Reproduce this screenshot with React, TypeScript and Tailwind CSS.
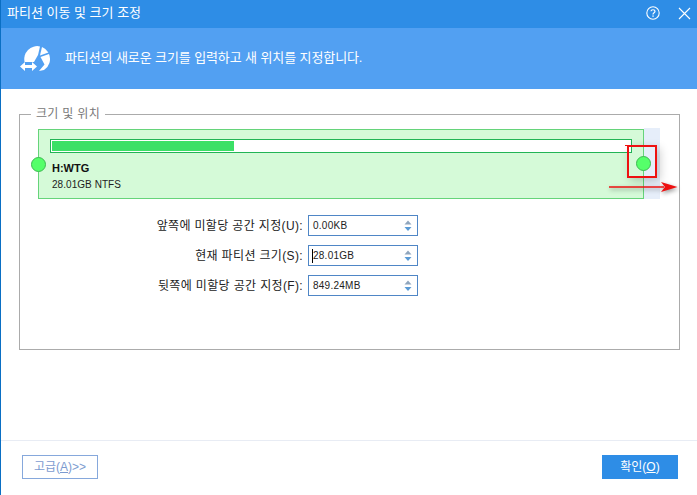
import React from "react";

const font = { fontFamily: '"Liberation Sans", "Noto Sans CJK KR", sans-serif' };

function Spin({ label, hot, value, caret }: { label: string; hot: string; value: string; caret?: boolean }) {
  return (
    <div className="flex items-center h-[21px]">
      <div className="w-[265px] text-right text-[12px] tracking-[0.35px] text-[#222] whitespace-nowrap">
        {label}(<span>{hot}</span>):
      </div>
      <div className="ml-[5px] w-[110px] h-[21px] border border-[#4f86c6] bg-white flex items-center pl-[4px] text-[10px] tracking-[0.25px] text-[#222] relative">
        {caret && <span className="absolute left-[3px] top-[3px] w-px h-[14px] bg-black" />}
        <span>{value}</span>
        <svg className="absolute right-[4px] top-[3px]" width="10" height="13" viewBox="0 0 10 13">
          <path d="M5 1.5 L8.5 5.5 H1.5 Z" fill="#8fa5bd" />
          <path d="M5 12 L8.5 8 H1.5 Z" fill="#5b9bd5" />
        </svg>
      </div>
    </div>
  );
}

export default function App() {
  return (
    <div className="w-[697px] h-[495px] bg-white flex flex-col border-l border-l-[#0a6fc4] overflow-hidden" style={font}>
      <div className="h-[28px] bg-[#2e8de6] flex items-center pl-[6px] text-white text-[13px] shrink-0">
        <span className="-mt-[2px]">파티션 이동 및 크기 조정</span>
        <div className="ml-auto flex items-center -mt-[2px]">
          <svg width="16" height="16" viewBox="0 0 16 16" className="mr-[17px]">
            <circle cx="8" cy="8" r="6.2" fill="none" stroke="#fff" strokeWidth="1.1" />
            <path d="M6 6.3 C6 4.2 10 4.2 10 6.3 C10 7.8 8 7.6 8 9.4" fill="none" stroke="#fff" strokeWidth="1.2" />
            <rect x="7.4" y="10.4" width="1.3" height="1.4" fill="#fff" />
          </svg>
          <svg width="13" height="13" viewBox="0 0 13 13" className="mr-[6px]">
            <path d="M1 1 L12 12 M12 1 L1 12" stroke="#fff" strokeWidth="1.1" />
          </svg>
        </div>
      </div>

      <div className="h-[61px] bg-[#52a0f2] flex items-center pl-[19px] text-white text-[13px] tracking-[-0.1px] shrink-0">
        <svg width="31" height="30" viewBox="0 0 31 30" className="mr-[14px]">
          <path d="M20 2.4 A13 13 0 0 0 4.6 18 L14 18 L18 11 Z" fill="#fff" />
          <path d="M22 3 A13 13 0 0 1 28.4 8.5 L20 11.5 Z" fill="#fff" />
          <path d="M20.5 13 L29 10 A13 13 0 0 1 24 26 L19 27 L24.5 20.5 Z" fill="#fff" />
          <path d="M0 22.5 L5 18 V21 H12 V18 L17 22.5 L12 27 V24 H5 V27 Z" fill="#fff" />
        </svg>
        <span className="mt-[-2px]">파티션의 새로운 크기를 입력하고 새 위치를 지정합니다.</span>
      </div>

      <div className="flex-1 pl-[18px] pr-[17px] pt-[24px]">
        <fieldset className="h-[243px] border border-[#ababab] pl-[18px] pr-[18px] relative -mt-[6px]">
          <legend className="ml-[-7px] px-[5px] text-[12px] tracking-[0.3px] text-[#777] leading-[14px]">크기 및 위치</legend>
          <div className="relative w-[622px] h-[70px] mt-[8px]">
            <div className="absolute left-[606px] top-[-1px] w-[16px] h-[71px] bg-[#e6eefa]" />
            <div className="relative w-[606px] h-[70px] border border-[#66d47a] bg-[#d5fad8] pl-[11px] pt-[9px]">
              <div className="w-[582px] h-[14px] border border-[#22b455] bg-white p-[1px]">
                <div className="w-[182px] h-full bg-[#3be066]" />
              </div>
              <div className="mt-[8px] ml-[2px] text-[11px] font-bold text-[#111] leading-[14px]">H:WTG</div>
              <div className="mt-[3px] ml-[2px] text-[10px] tracking-[0.05px] text-[#222] leading-[14px]">28.01GB NTFS</div>
            </div>
            <span className="absolute left-[-7px] top-[28px] w-[15px] h-[15px] rounded-full bg-[#55ff6a] border border-[#3cba50]" />
            <span className="absolute left-[589px] top-[16px] w-[30px] h-[33px] shadow-[3px_3px_9px_rgba(0,0,0,0.2)] border-2 border-[#ee1111]" />
            <span className="absolute left-[587px] top-[16px] w-[4px] h-[1px] bg-[#ee1111]" />
            <span className="absolute left-[598px] top-[27px] w-[15px] h-[15px] rounded-full bg-[#55ff6a] border border-[#3cba50]" />
            <svg className="absolute left-[570px] top-[48px] overflow-visible drop-shadow-[1px_2px_2px_rgba(0,0,0,0.4)]" width="72" height="16" viewBox="0 0 72 16">
              <path d="M1 10 H56" stroke="#ee1111" strokeWidth="1.4" />
              <path d="M53 5 L69.5 10 L53 15 L57 10 Z" fill="#ee1111" />
            </svg>
          </div>
          <div className="mt-[16px] flex flex-col gap-[9px]">
            <Spin label="앞쪽에 미할당 공간 지정" hot="U" value="0.00KB" />
            <Spin label="현재 파티션 크기" hot="S" value="28.01GB" caret />
            <Spin label="뒷쪽에 미할당 공간 지정" hot="F" value="849.24MB" />
          </div>
        </fieldset>
      </div>

      <div className="h-[55px] border-t border-t-[#e8ecf4] flex items-start justify-between pl-[21px] pr-[19px] pt-[14px] shrink-0">
        <button className="w-[76px] h-[24px] border border-[#86a8dc] text-[12px] text-[#7c9bd0] bg-white">고급(<u>A</u>)&gt;&gt;</button>
        <button className="w-[76px] h-[24px] bg-[#2e8de6] text-[12px] text-white">확인(<u>O</u>)</button>
      </div>
    </div>
  );
}
